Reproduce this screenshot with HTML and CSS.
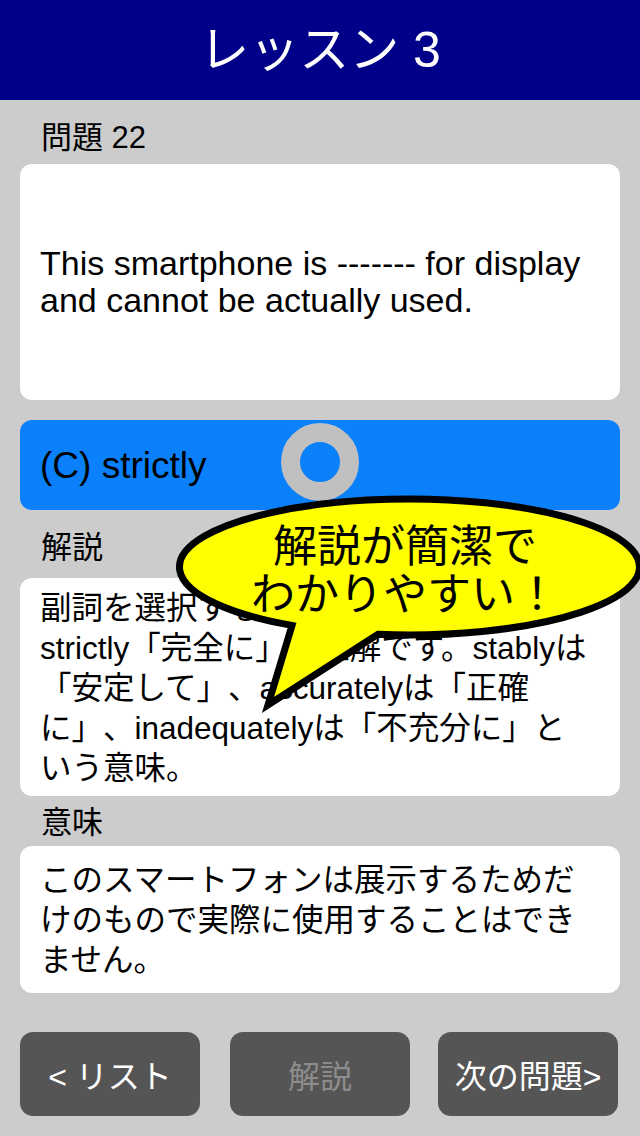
FILE: index.html
```html
<!DOCTYPE html>
<html lang="ja">
<head>
<meta charset="utf-8">
<title>レッスン 3</title>
<link rel="stylesheet" href="styles.css">
</head>
<body>
<div class="page">
  <header class="header"><h1 class="title">レッスン 3</h1></header>
  <main class="content">
    <div class="label label-q">問題 22</div>
    <div class="card card-q">
      <p class="q-text">This smartphone is ------- for display<br>and cannot be actually used.</p>
    </div>
    <div class="choice">
      <span class="choice-text">(C) strictly</span>
      <span class="ring"></span>
    </div>
    <div class="label label-e">解説</div>
    <div class="card card-e">
      <p class="body-text">副詞を選択する問題です。<br>strictly「完全に」が正解です。stablyは<br>「安定して」、accuratelyは「正確<br>に」、inadequatelyは「不充分に」と<br>いう意味。</p>
    </div>
    <div class="label label-m">意味</div>
    <div class="card card-m">
      <p class="body-text">このスマートフォンは展示するためだ<br>けのもので実際に使用することはでき<br>ません。</p>
    </div>
    <nav class="buttons">
      <div class="btn">&lt; リスト</div>
      <div class="btn btn-disabled">解説</div>
      <div class="btn">次の問題&gt;</div>
    </nav>
  </main>
  <div class="bubble">
    <svg class="bubble-shape" width="470" height="225" viewBox="0 0 470 225">
      <path d="M122,135.4 L98,215 L208,144.3 A230,68 0 1,0 122,135.4 Z" fill="#ffff00" stroke="#000" stroke-width="7" stroke-linejoin="miter"/>
    </svg>
    <div class="bubble-text">解説が簡潔で<br>わかりやすい！</div>
  </div>
</div>
</body>
</html>
```
FILE: styles.css
```css
* { box-sizing: border-box; }
html, body { margin: 0; padding: 0; }
body {
  width: 640px;
  height: 1136px;
  overflow: hidden;
  background: #cccccc;
  font-family: "Liberation Sans", "Noto Sans CJK JP", sans-serif;
  color: #000;
  text-spacing-trim: space-all;
}
.page {
  position: relative;
  width: 640px;
  height: 1136px;
}
.header {
  height: 100px;
  background: #000088;
  display: flex;
  align-items: center;
  justify-content: center;
}
.title {
  margin: 0;
  color: #fff;
  font-size: 50px;
  font-weight: normal;
  line-height: 1;
}
.content {
  padding: 0 20px;
  display: flex;
  flex-direction: column;
}
.label {
  font-size: 31px;
  line-height: 40px;
  height: 40px;
  padding-left: 21px;
}
.label-q { margin-top: 18px; margin-bottom: 6px; }
.label-e { margin-top: 18px; margin-bottom: 10px; }
.label-m { margin-top: 7px; margin-bottom: 3px; }
.card {
  background: #fff;
  border-radius: 12px;
  padding: 0 20px;
}
.card-q {
  height: 236px;
  display: flex;
  align-items: center;
}
.q-text {
  margin: 0;
  font-size: 34px;
  line-height: 37px;
  white-space: nowrap;
}
.choice {
  position: relative;
  margin-top: 20px;
  height: 90px;
  background: #0a80fb;
  border-radius: 12px;
  display: flex;
  align-items: center;
  padding-left: 20px;
}
.choice-text {
  font-size: 37px;
  line-height: 1;
}
.ring {
  position: absolute;
  left: 261px;
  top: 3px;
  width: 78px;
  height: 78px;
  border: 19px solid #c0c0c0;
  border-radius: 50%;
}
.card-e {
  height: 218px;
  padding-top: 10px;
}
.card-m {
  height: 147px;
  padding-top: 14px;
}
.body-text {
  margin: 0;
  font-size: 31.5px;
  line-height: 40px;
  white-space: nowrap;
}
.buttons {
  margin-top: 39px;
  display: flex;
  gap: 30px;
}
.btn {
  width: 180px;
  height: 84px;
  background: #555555;
  border-radius: 13px;
  color: #fff;
  font-size: 32px;
  display: flex;
  align-items: center;
  justify-content: center;
}
.btn + .btn + .btn { margin-left: -2px; }
.btn-disabled { color: #8c8c8c; }
.bubble {
  position: absolute;
  left: 170px;
  top: 490px;
  width: 470px;
  height: 225px;
}
.bubble-shape {
  position: absolute;
  left: 0;
  top: 0;
  overflow: hidden;
}
.bubble-text {
  position: absolute;
  left: 0;
  top: 33px;
  width: 470px;
  text-align: center;
  font-size: 44px;
  line-height: 48px;
  color: #000;
}
```
